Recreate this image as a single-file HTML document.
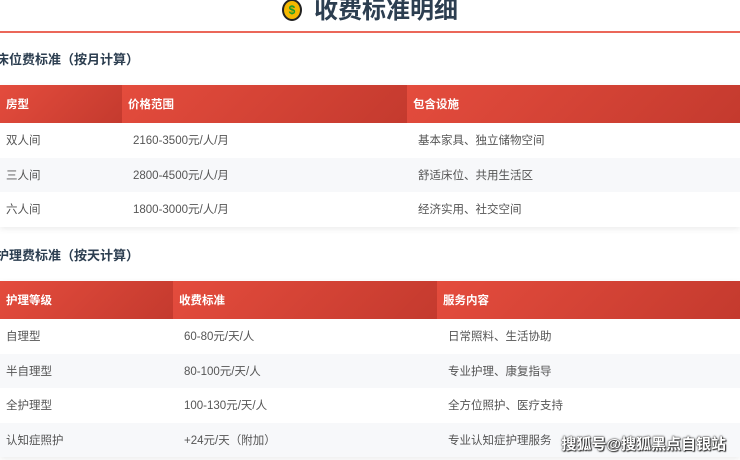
<!DOCTYPE html>
<html><head><meta charset="utf-8"><style>
*{margin:0;padding:0;box-sizing:border-box}
body{width:740px;height:460px;overflow:hidden;background:#fff;font-family:"Liberation Sans","Noto Sans CJK SC",sans-serif;position:relative;color:#333}
.title{position:absolute;left:0;right:0;top:-7px;text-align:center;font-size:24px;font-weight:bold;color:#2c3e50;height:36px;line-height:36px}
.title .ic{display:inline-block;width:20px;height:22px;border-radius:50%;background:#f5b800;border:2px solid #222;vertical-align:middle;margin-right:12px;position:relative;top:-2px;font-size:12px;line-height:18px;color:#1a9a2a;text-align:center}
.line{position:absolute;left:0;right:0;top:31px;height:2px;background:#e74c3c;opacity:.85}
h3{position:absolute;left:-4px;font-size:13px;font-weight:bold;color:#2c3e50}
table{position:absolute;left:0;width:740px;border-collapse:collapse;font-size:11.5px;box-shadow:0 2px 6px rgba(0,0,0,.08)}
th{height:38px;color:#fff;text-align:left;padding-left:6px;font-weight:bold;background:linear-gradient(135deg,#e44c3d,#c43a2e)}
td{height:34.5px;padding-left:11px;color:#555}
td:first-child{padding-left:6px}
tr:nth-child(odd) td{background:#f7f8fa}
td,th{border:none}
.wm{position:absolute;right:14px;bottom:6px;font-size:15px;color:#fff;font-weight:bold;text-shadow:0 0 2px #333,0 0 1px #000,1px 1px 1px #333}
</style></head><body>
<div class="title"><span class="ic">$</span>收费标准明细</div>
<div class="line"></div>
<h3 style="top:49px">床位费标准（按月计算）</h3>
<table style="top:85px">
<tr><th style="width:122px">房型</th><th style="width:285px">价格范围</th><th>包含设施</th></tr>
<tr><td>双人间</td><td>2160-3500元/人/月</td><td>基本家具、独立储物空间</td></tr>
<tr><td>三人间</td><td>2800-4500元/人/月</td><td>舒适床位、共用生活区</td></tr>
<tr><td>六人间</td><td>1800-3000元/人/月</td><td>经济实用、社交空间</td></tr>
</table>
<h3 style="top:245px">护理费标准（按天计算）</h3>
<table style="top:281px">
<tr><th style="width:173px">护理等级</th><th style="width:264px">收费标准</th><th>服务内容</th></tr>
<tr><td>自理型</td><td>60-80元/天/人</td><td>日常照料、生活协助</td></tr>
<tr><td>半自理型</td><td>80-100元/天/人</td><td>专业护理、康复指导</td></tr>
<tr><td>全护理型</td><td>100-130元/天/人</td><td>全方位照护、医疗支持</td></tr>
<tr><td>认知症照护</td><td>+24元/天（附加）</td><td>专业认知症护理服务</td></tr>
</table>
<div class="wm">搜狐号@搜狐黑点自银站</div>
</body></html>
